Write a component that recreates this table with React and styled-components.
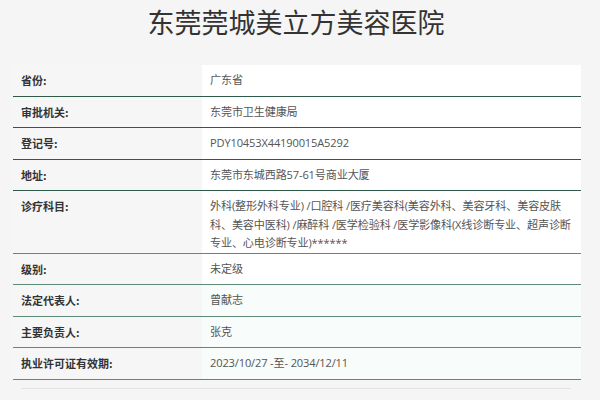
import React from 'react'
import styled, { createGlobalStyle } from 'styled-components'

const GlobalStyle = createGlobalStyle`
  html, body {
    margin: 0;
    padding: 0;
    background: #f5f5f5;
    font-family: "Noto Sans CJK SC", "Noto Sans", sans-serif;
  }
`

const Page = styled.div`
  width: 600px;
  height: 400px;
  overflow: hidden;
  padding: 0 19px 0 13px;
  box-sizing: border-box;
`

const Title = styled.h1`
  margin: 8px 0 30px;
  text-align: center;
  font-size: 27px;
  line-height: 27px;
  font-weight: 400;
  color: #333;
  padding-right: 2px;
`

const Table = styled.div`
  display: flex;
  flex-direction: column;
`

const Row = styled.div`
  display: grid;
  grid-template-columns: 189px 1fr;
  border-bottom: 1px solid ${(p) => (p.$dark ? '#2f5a48' : '#5f8a78')};
`

const Label = styled.div`
  padding: 6px 8px;
  font-size: 11px;
  line-height: 18.5px;
  font-weight: 700;
  color: #333;
  background: #f6f6f6;
`

const Value = styled.div`
  padding: ${(p) => (p.$multi ? '6px 0 0 8px' : '6px 4px 6px 8px')};
  font-family: "Open Sans", "Noto Sans CJK SC", sans-serif;
  font-size: 11.1px;
  letter-spacing: -0.15px;
  line-height: 18.5px;
  color: #555;
  background: ${(p) => (p.$tint ? '#f8fcfa' : '#fff')};
  white-space: ${(p) => (p.$multi ? 'nowrap' : 'normal')};
`

const Shadow = styled.div`
  height: 1px;
  margin: 8px 11px 0 9px;
  background: #e2e2e2;
`

const rows = [
  ['省份:', ['广东省']],
  ['审批机关:', ['东莞市卫生健康局']],
  ['登记号:', ['PDY10453X44190015A5292']],
  ['地址:', ['东莞市东城西路57-61号商业大厦']],
  [
    '诊疗科目:',
    [
      '外科(整形外科专业) /口腔科 /医疗美容科(美容外科、美容牙科、美容皮肤',
      '科、美容中医科) /麻醉科 /医学检验科 /医学影像科(X线诊断专业、超声诊断',
      '专业、心电诊断专业)******',
    ],
  ],
  ['级别:', ['未定级']],
  ['法定代表人:', ['曾献志']],
  ['主要负责人:', ['张克']],
  ['执业许可证有效期:', ['2023/10/27 -至- 2034/12/11']],
]

export default function App() {
  return (
    <Page>
      <GlobalStyle />
      <Title>东莞莞城美立方美容医院</Title>
      <Table>
        {rows.map(([label, lines], i) => (
          <Row key={label} $dark={i < 4}>
            <Label>{label}</Label>
            <Value $multi={lines.length > 1} $tint={i >= 6}>
              {lines.map((line, j) => (
                <React.Fragment key={j}>
                  {j > 0 && <br />}
                  {line}
                </React.Fragment>
              ))}
            </Value>
          </Row>
        ))}
      </Table>
      <Shadow />
    </Page>
  )
}
